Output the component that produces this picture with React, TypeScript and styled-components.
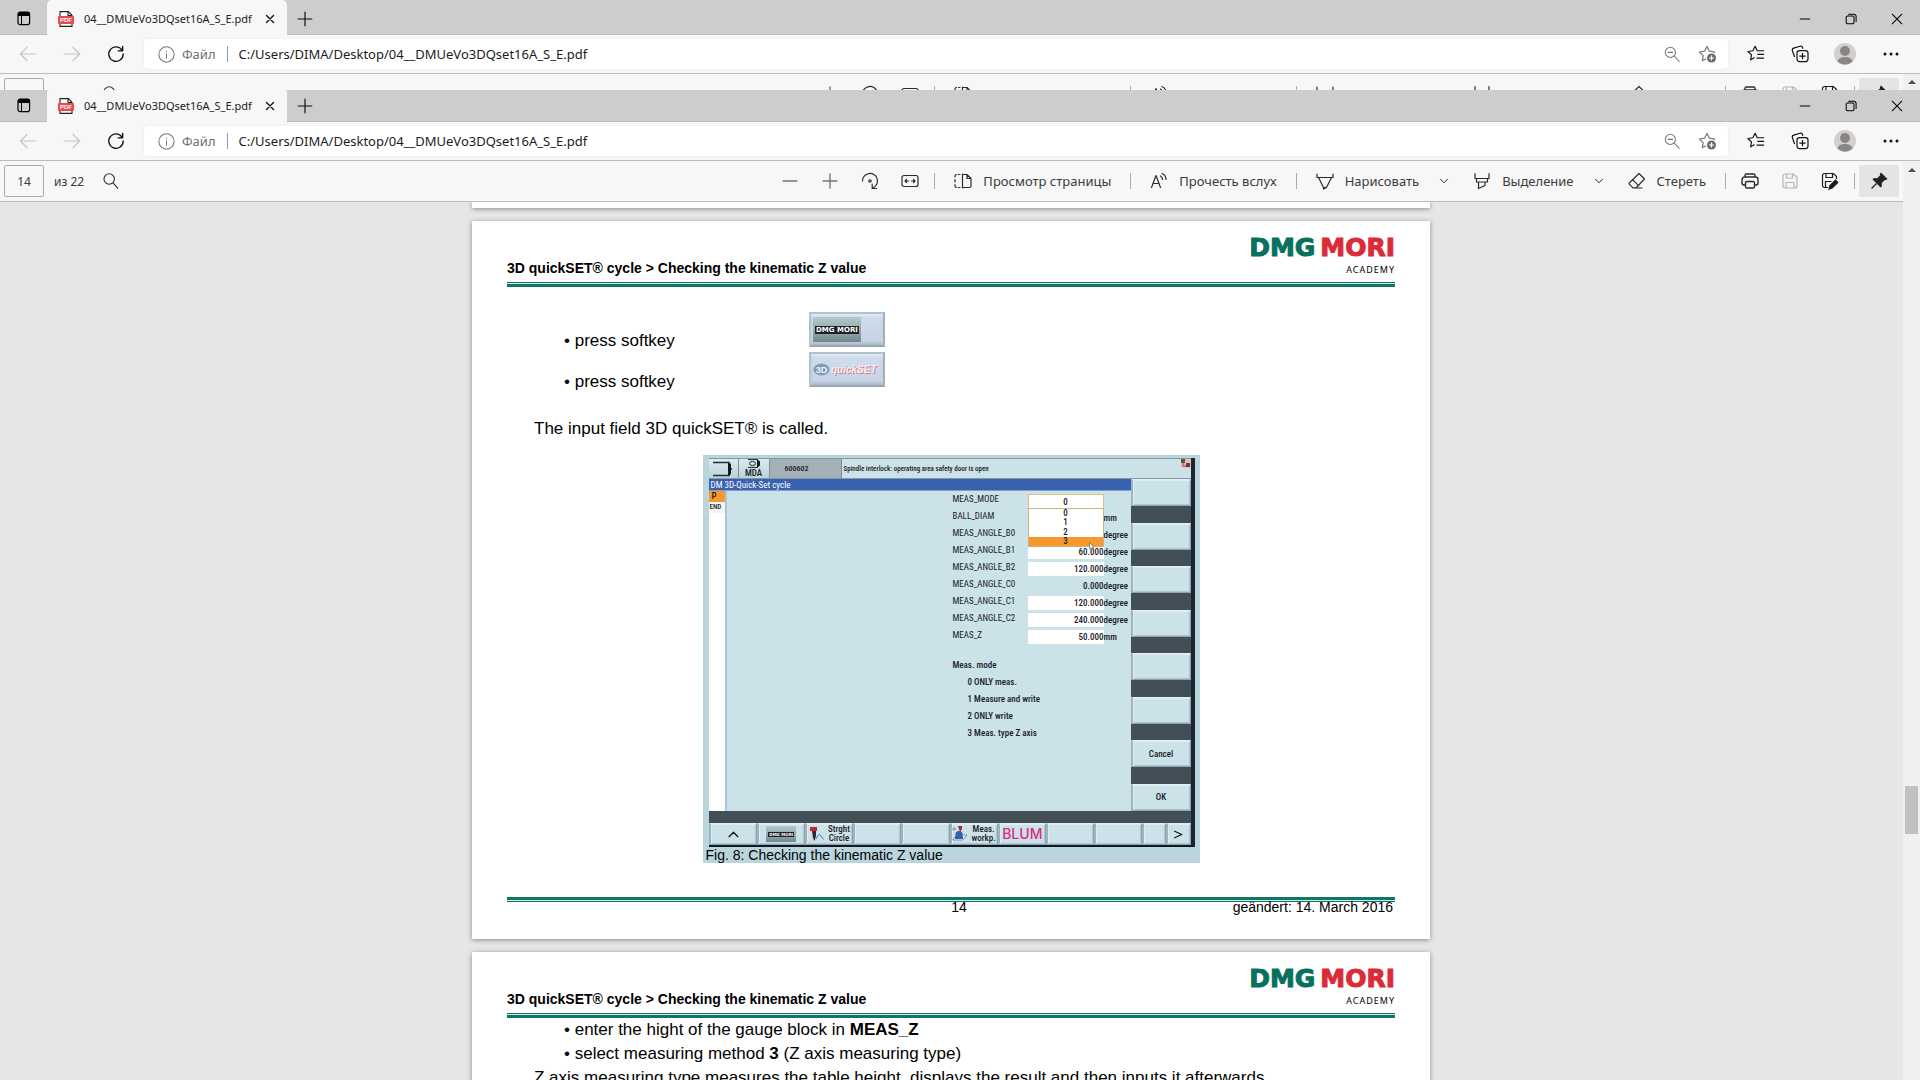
import React from "react";
import styled, { createGlobalStyle } from "styled-components";

const uiFont = `"Noto Sans", "Open Sans", sans-serif`;
const docFont = `"Liberation Sans", Arial, sans-serif`;
const cncFont = `"Roboto Condensed", Roboto, "Liberation Sans", sans-serif`;
const teal = "#12756a";

const GlobalStyle = createGlobalStyle`
  * { box-sizing: border-box; }
  body { margin: 0; overflow: hidden; font-family: ${uiFont}; color: #1b1b1b; }
  button, input, select { font: inherit; color: inherit; margin: 0; padding: 0; border: 0; background: none; border-radius: 0; }
  svg { display: block; flex: none; }
  p, h2, ul, figure { margin: 0; padding: 0; }
`;

/* ---------- browser chrome ---------- */

const Screen = styled.div`
  display: flex;
  flex-direction: column;
  height: 100vh;
`;

const WindowFrame = styled.section<{ $peek?: boolean }>`
  display: flex;
  flex-direction: column;
  overflow: hidden;
  min-height: 0;
  flex: ${(p) => (p.$peek ? "none" : "1")};
  height: ${(p) => (p.$peek ? "90px" : "auto")};
`;

const TabStrip = styled.div<{ $peek?: boolean }>`
  display: flex;
  flex: none;
  height: ${(p) => (p.$peek ? "35px" : "32px")};
  background: #cdcdcd;
`;

const StripButton = styled.button<{ $w: number; $peek?: boolean }>`
  display: flex;
  align-items: center;
  justify-content: center;
  width: ${(p) => p.$w}px;
  padding-top: ${(p) => (p.$peek ? "3px" : "0")};
  border-bottom: 1px solid #bcbcbc;
`;

const StripFill = styled.div`
  flex: 1;
  border-bottom: 1px solid #bcbcbc;
`;

const Tab = styled.div<{ $peek?: boolean }>`
  display: flex;
  align-items: center;
  width: 240px;
  padding: ${(p) => (p.$peek ? "3px" : "0")} 9px 0 11px;
  background: #f7f7f7;
  border-radius: ${(p) => (p.$peek ? "5px 5px 0 0" : "2px 2px 0 0")};
`;

const TabTitle = styled.span`
  flex: 1;
  margin-left: 10px;
  font-size: 11px;
  line-height: 16px;
  white-space: nowrap;
`;

const TabClose = styled.button`
  display: flex;
  align-items: center;
  justify-content: center;
  width: 16px;
  height: 16px;
`;

const AddressRow = styled.div`
  display: flex;
  align-items: center;
  flex: none;
  height: 39px;
  padding: 0 6px;
  background: #f7f7f7;
  border-bottom: 1px solid #bcbcbc;
`;

const NavButton = styled.button<{ $w: number }>`
  display: flex;
  align-items: center;
  justify-content: center;
  width: ${(p) => p.$w}px;
  height: 30px;
`;

const AddressBox = styled.div`
  display: flex;
  align-items: center;
  flex: 1;
  height: 30px;
  margin: 0 6px;
  padding: 0 2px 0 14px;
  background: #fff;
  border-radius: 4px;
  box-shadow: 0 0 2px #e2e2e2;
`;

const Scheme = styled.label`
  margin-left: 7px;
  padding-right: 11px;
  font-size: 13px;
  line-height: 16px;
  color: #6f6f6f;
  border-right: 1px solid #9a9a9a;
`;

const UrlInput = styled.input`
  flex: 1;
  margin-left: 11px;
  font-size: 13px;
  line-height: 16px;
  outline: none;
`;

/* ---------- pdf viewer chrome ---------- */

const Viewer = styled.div`
  display: flex;
  flex: 1;
  min-height: 0;
`;

const ViewerMain = styled.div`
  display: flex;
  flex-direction: column;
  flex: 1;
  min-width: 0;
`;

const PdfBar = styled.div`
  display: flex;
  align-items: center;
  flex: none;
  height: 41px;
  padding-left: 4px;
  background: #f7f7f7;
  border-bottom: 1px solid #bcbcbc;
  font-size: 13px;
  color: #3b3b3b;
`;

const PageInput = styled.input`
  width: 40px;
  height: 32px;
  border: 1px solid #a9a9a9;
  border-radius: 2px;
  font-size: 12px;
  text-align: center;
`;

const PageCount = styled.label`
  margin: 0 3px 0 10px;
  font-size: 12px;
`;

const BarGroup = styled.div<{ $push?: boolean }>`
  display: flex;
  padding: 0 4px;
  margin-left: ${(p) => (p.$push ? "auto" : "0")};
`;

const BarIcon = styled.button<{ $active?: boolean }>`
  display: flex;
  align-items: center;
  justify-content: center;
  width: 40px;
  height: 32px;
  border-radius: 2px;
  background: ${(p) => (p.$active ? "#e4e4e4" : "transparent")};
`;

const BarLabel = styled.button<{ $tight?: boolean }>`
  display: flex;
  align-items: center;
  gap: 10px;
  height: 32px;
  padding: 0 ${(p) => (p.$tight ? "15px" : "19px")} 0 18px;
  white-space: nowrap;
`;

const BarChevron = styled.button`
  display: flex;
  align-items: center;
  justify-content: center;
  width: 20px;
  height: 32px;
`;

const BarRule = styled.span`
  width: 1px;
  height: 16px;
  background: #ababab;
`;

const ScrollTrack = styled.div`
  display: flex;
  flex-direction: column;
  width: 17px;
  background: #f0f0f0;
`;

const ScrollArrow = styled.button`
  display: flex;
  align-items: center;
  justify-content: center;
  height: 17px;
`;

const ScrollGap = styled.div<{ $grow: number }>`
  flex: ${(p) => p.$grow};
`;

const ScrollThumb = styled.div`
  height: 48px;
  margin: 0 2px;
  background: #c1c1c1;
`;

/* ---------- document ---------- */

const Canvas = styled.main`
  display: flex;
  flex-direction: column;
  align-items: center;
  gap: 13px;
  flex: 1;
  min-height: 0;
  padding-right: 1px;
  overflow: hidden;
  background: #e6e6e6;
  font-family: ${docFont};
  color: #000;
`;

const Sheet = styled.article`
  flex: none;
  width: 100%;
  max-width: 958px;
  padding: 0 35px 27px;
  background: #fff;
  box-shadow: 0 1px 5px rgba(0, 0, 0, 0.4);
`;

const SheetTail = styled.div`
  flex: none;
  width: 100%;
  max-width: 958px;
  height: 6px;
  background: #fff;
  box-shadow: 0 1px 5px rgba(0, 0, 0, 0.4);
`;

const SheetHeader = styled.header`
  display: flex;
  align-items: flex-end;
  justify-content: space-between;
  padding: 18px 0 4px;
`;

const SheetTitle = styled.h2`
  font-size: 14px;
  font-weight: 700;
  line-height: 20px;
`;

const Brand = styled.div`
  display: flex;
  flex-direction: column;
  align-items: flex-end;
  gap: 8px;
  padding-bottom: 2px;
`;

const BrandName = styled.span`
  display: flex;
  gap: 5px;
  font: 700 25px/17px "DejaVu Sans", Verdana, sans-serif;
  color: #07705f;
  -webkit-text-stroke: 1px currentColor;
`;

const BrandRed = styled.span`
  color: #dc2b38;
`;

const BrandSub = styled.span`
  font: 400 9px/12px ${uiFont};
  letter-spacing: 1px;
`;

const DoubleRule = styled.div<{ $flip?: boolean }>`
  height: 5px;
  background: linear-gradient(
    ${(p) => (p.$flip ? "to top" : "to bottom")},
    ${teal} 1px, #cfe9e4 1px, #cfe9e4 2px, ${teal} 2px, ${teal} 5px
  );
`;

const SoftkeyRow = styled.div`
  display: grid;
  grid-template-columns: 302px auto;
  align-items: start;
  justify-content: start;
  padding-top: 25px;
`;

const BulletList = styled.ul<{ $spaced?: boolean }>`
  display: flex;
  flex-direction: column;
  gap: ${(p) => (p.$spaced ? "17px" : "0")};
  padding: ${(p) => (p.$spaced ? "17px" : "0")} 0 0 57px;
  list-style: none;
  font-size: 17px;
  line-height: 24px;
`;

const SoftkeyStack = styled.div`
  display: flex;
  flex-direction: column;
  gap: 5px;
`;

const Softkey = styled.button`
  display: flex;
  align-items: center;
  width: 76px;
  height: 35px;
  padding: 0 2px;
  background: linear-gradient(#d3dfee, #c4d1e4);
  border: 2px solid;
  border-color: #b4c0ca #a3afb9 #9aa7b1 #b4c0ca;
  box-shadow: inset 0 2px 2px #dcebf5, inset 0 -2px 3px #a9b7c4;
`;

const SoftkeyPlate = styled.span<{ $small?: boolean }>`
  display: flex;
  align-items: center;
  justify-content: center;
  width: ${(p) => (p.$small ? "30px" : "48px")};
  height: ${(p) => (p.$small ? "16px" : "25px")};
  background: linear-gradient(#b4c9ca, #8fa5a8 60%, #6f898f);
`;

const PlateText = styled.span<{ $small?: boolean }>`
  padding: 0 1px;
  background: #1c2225;
  color: #fff;
  font: 700 ${(p) => (p.$small ? "4px/5px" : "7px/8px")} "DejaVu Sans", sans-serif;
  white-space: nowrap;
`;

const QuickSet = styled.span`
  margin-left: 1px;
  font-size: 10px;
  font-style: italic;
  font-weight: 700;
  color: #f4eef4;
  text-shadow: 1px 1px 0 #d67f88;
`;

const Paragraph = styled.p<{ $first?: boolean }>`
  margin-top: ${(p) => (p.$first ? "23px" : "0")};
  padding-left: 27px;
  font-size: 17px;
  line-height: 24px;
`;

const Figure = styled.figure`
  width: 497px;
  margin: 14px auto 34px;
  padding: 3px 5px 0 6px;
  background: #bad5dd;
`;

const Caption = styled.figcaption`
  margin-left: -3px;
  font-size: 14px;
  line-height: 16px;
  white-space: nowrap;
`;

const SheetFooter = styled.footer`
  display: grid;
  grid-template-columns: 1fr auto 1fr;
  padding: 0 2px 0 18px;
  font-size: 14px;
  line-height: 10px;
`;

const FooterDate = styled.span`
  text-align: right;
`;

/* ---------- machine control panel ---------- */

const Panel = styled.div`
  border-right: 4px solid #1a2530;
  border-bottom: 2px solid #0f1a26;
  background: #424f57;
  font: 500 9px/10px ${cncFont};
  color: #1a2126;
`;

const StatusRow = styled.div`
  display: flex;
  height: 21px;
  border-top: 1px solid #87989f;
  border-bottom: 1px solid #87989f;
  background: #cbe2e9;
`;

const StatusCell = styled.div<{ $w: number; $dark?: boolean }>`
  display: flex;
  flex-direction: column;
  align-items: ${(p) => (p.$dark ? "flex-start" : "center")};
  justify-content: center;
  width: ${(p) => p.$w}px;
  padding-left: ${(p) => (p.$dark ? "15px" : "0")};
  border-right: 1px solid #7f929b;
  font-size: ${(p) => (p.$dark ? "8px" : "9px")};
  background: ${(p) => (p.$dark ? "#a3b0b7" : "linear-gradient(#dcebf1, #bcd2db)")};
`;

const StatusMessage = styled.div`
  flex: 1;
  padding-left: 2px;
  font-size: 7px;
  line-height: 21px;
`;

const PanelBody = styled.div`
  display: flex;
  height: 332px;
`;

const WorkArea = styled.div`
  display: flex;
  flex-direction: column;
  flex: 1;
  background: #cbe2e9;
`;

const CycleTitle = styled.div`
  height: 12px;
  padding-left: 2px;
  line-height: 12px;
  font-weight: 400;
  background: #3862af;
  border-bottom: 1px solid #7ba0d0;
  color: #fff;
`;

const WorkColumns = styled.div`
  display: flex;
  flex: 1;
`;

const ProgramList = styled.div`
  width: 18px;
  background: #fff;
  border-right: 2px solid #a9c5d8;
`;

const ProgramLine = styled.div<{ $current?: boolean }>`
  height: 11px;
  padding-left: ${(p) => (p.$current ? "3px" : "1px")};
  font-size: ${(p) => (p.$current ? "9px" : "7px")};
  line-height: 11px;
  background: ${(p) => (p.$current ? "#f7982d" : "#f2f5f3")};
`;

const CycleForm = styled.form`
  width: 178px;
  margin-left: auto;
  padding-top: 3px;
`;

const FieldGrid = styled.div`
  display: grid;
  grid-template-columns: 75px 76px auto;
  grid-auto-rows: 14px;
  row-gap: 3px;
`;

const FieldName = styled.label`
  font-weight: 400;
  line-height: 10px;
`;

const FieldValue = styled.input<{ $plain?: boolean }>`
  width: 76px;
  height: 14px;
  text-align: right;
  background: ${(p) => (p.$plain ? "transparent" : "#fff")};
`;

const FieldUnit = styled.span`
  line-height: 15px;
`;

const ModeCell = styled.div`
  position: relative;
`;

const ModeSelect = styled.select`
  appearance: none;
  display: block;
  width: 76px;
  height: 15px;
  border: 1px solid #e3bd83;
  background: #fff;
  text-align: center;
  text-align-last: center;
`;

const ModeOptions = styled.ul`
  position: absolute;
  z-index: 1;
  top: 14px;
  left: 0;
  display: flex;
  flex-direction: column;
  width: 76px;
  height: 39px;
  border: 1px solid #c9b18c;
  background: #fff;
  list-style: none;
`;

const ModeOption = styled.li<{ $hot?: boolean }>`
  flex: 1;
  text-align: center;
  line-height: 9px;
  background: ${(p) => (p.$hot ? "#f7982d" : "transparent")};
`;

const Pointer = styled.svg`
  position: absolute;
  z-index: 2;
  top: 48px;
  left: 61px;
`;

const ModeLegend = styled.div`
  margin-top: 13px;
  line-height: 17px;
`;

const LegendLine = styled.div`
  padding-left: 15px;
`;

const KeyColumn = styled.div`
  display: flex;
  flex-direction: column;
  justify-content: space-between;
  width: 60px;
`;

const PanelKey = styled.button`
  display: flex;
  align-items: center;
  justify-content: center;
  gap: 3px;
  height: 27px;
  min-width: 0;
  background: #cbe2e9;
  border: 1px solid;
  border-width: 1px 1px 1px 2px;
  border-color: #e0eef3 #8fa4ae #8fa4ae #9fb3bc;
  box-shadow: inset 1px 1px 1px #e0eef3, inset -1px -1px 1px #b0c6cf;
  text-align: center;
`;

const KeyRow = styled.div`
  display: grid;
  grid-template-columns: repeat(9, 2fr) 1fr 1fr;
  padding-top: 12px;
`;

const RowKey = styled(PanelKey)`
  height: 22px;
  line-height: 9px;
`;

const Blum = styled.span`
  font: 500 14px/14px Inter, sans-serif;
  color: #dc2a8c;
`;

/* ---------- icons ---------- */

type IconProps = { d: string; size?: number; c?: string; w?: number };
const Icon = ({ d, size = 20, c = "#2b2b2b", w = 1.2 }: IconProps) => (
  <svg width={size} height={size} viewBox="0 0 20 20" fill="none" stroke={c} strokeWidth={w} strokeLinejoin="round" strokeLinecap="round" aria-hidden="true">
    <path d={d} />
  </svg>
);

const TabActions = () => (
  <svg width="14" height="15" viewBox="0 0 14 15" aria-hidden="true">
    <rect x="1" y="1" width="11.6" height="12.6" rx="2.2" fill="none" stroke="#000" strokeWidth="1.2" />
    <path d="M1 5V3a2 2 0 0 1 2-2h7.600a2 2 0 0 1 2 2v2z" />
    <path d="M4.500 5v8.500" stroke="#000" />
  </svg>
);

const PdfFile = () => (
  <svg width="16" height="16" viewBox="0 0 16 16" aria-hidden="true">
    <path d="M2 .6h8.300L14 4.300v11.100H2z" fill="#fff" stroke="#222" strokeWidth="1.100" />
    <path d="M10 .6v4h4" fill="none" stroke="#222" strokeWidth="1.100" />
    <rect x="0" y="5" width="16" height="8" rx="1" fill="#e8494c" />
    <text x="8" y="11.400" textAnchor="middle" fontFamily="Liberation Sans" fontWeight="700" fontSize="6" fill="#fff">PDF</text>
  </svg>
);

const StarPlus = () => (
  <svg width="20" height="18" viewBox="0 0 20 18" aria-hidden="true">
    <path d="M8 13.800 4.300 15.700 5.200 10.600 1.400 7l5.200-.8L9 1.400l2.400 4.800 5.200.8-1 1" fill="none" stroke="#767676" strokeWidth="1.200" strokeLinejoin="round" />
    <circle cx="13.500" cy="13" r="4.500" fill="#6b6b6b" />
    <path d="M13.500 10.500v5M11 13h5" stroke="#fff" strokeWidth="1.200" />
  </svg>
);

const Collections = () => (
  <svg width="18" height="18" viewBox="0 0 18 18" fill="none" stroke="#111" strokeWidth="1.200" aria-hidden="true">
    <path d="M3.600 12 1.400 5.600a2 2 0 0 1 1.300-2.500L9 1.200a2 2 0 0 1 2.500 1.300l.4 1.300" />
    <rect x="6" y="5.600" width="11" height="11" rx="2.500" />
    <path d="M11.500 8v6.200M8.400 11.100h6.200" />
  </svg>
);

const Avatar = () => (
  <svg width="22" height="22" viewBox="0 0 22 22" aria-hidden="true">
    <circle cx="11" cy="11" r="11" fill="#d2d0ce" />
    <circle cx="11" cy="8" r="5" fill="#8a8683" />
    <path d="M3.500 18.500c1-3.400 4-4.500 7.500-4.500s6.500 1.100 7.500 4.500a11 11 0 0 1-15 0z" fill="#8a8683" />
  </svg>
);

const Pin = () => (
  <svg width="20" height="20" viewBox="0 0 20 20" aria-hidden="true">
    <path d="M12 1.500 18.500 8l-1.300 1-1.400-.1-3 3 .1 3.300-1.300 1.300L3.500 8.400l1.300-1.300 3.300.1 3-3-.1-1.400z" fill="#222" />
    <path d="M7.500 12.500 2.500 17.500" stroke="#222" strokeWidth="1.200" />
  </svg>
);

const SaveAs = () => (
  <svg width="20" height="20" viewBox="0 0 20 20" fill="none" stroke="#1b1b1b" strokeWidth="1.200" aria-hidden="true">
    <path d="M8 16.500H4.500a2 2 0 0 1-2-2v-10a2 2 0 0 1 2-2h9l3 3V8M6 2.500v4h6.500v-4M5.500 16.500v-6h6" />
    <path d="M9 18l1-3.500 5.500-5.300 2.200 2.200L12.200 17z" fill="#1b1b1b" />
  </svg>
);

/* ---------- composition ---------- */

const FILE = "04__DMUeVo3DQset16A_S_E.pdf";

function BrowserChrome({ id, peek }: { id: string; peek?: boolean }) {
  return (
    <>
      <TabStrip $peek={peek}>
        <StripButton $w={47} $peek={peek} aria-label="Tab actions"><TabActions /></StripButton>
        <Tab $peek={peek}>
          <PdfFile />
          <TabTitle>{FILE}</TabTitle>
          <TabClose aria-label="Close tab"><Icon size={14} c="#111" w={2} d="M5 5l10 10M15 5L5 15" /></TabClose>
        </Tab>
        <StripButton $w={35} $peek={peek} aria-label="New tab"><Icon size={16} c="#111" w={1.5} d="M10 1.500v17M1.500 10h17" /></StripButton>
        <StripFill />
        <StripButton $w={46} $peek={peek} aria-label="Minimize"><Icon size={12} c="#000" w={1.7} d="M2 10h16" /></StripButton>
        <StripButton $w={46} $peek={peek} aria-label="Restore"><Icon size={12} c="#000" w={1.7} d="M4 5h9a2 2 0 0 1 2 2v9a2 2 0 0 1-2 2H4a2 2 0 0 1-2-2V7a2 2 0 0 1 2-2zM6 2h8.500a4 4 0 0 1 4 4v8" /></StripButton>
        <StripButton $w={46} $peek={peek} aria-label="Close"><Icon size={12} c="#000" w={1.7} d="M2 2l16 16M18 2L2 18" /></StripButton>
      </TabStrip>
      <AddressRow>
        <NavButton $w={44} aria-label="Back"><Icon size={18} c="#c4c4c4" d="M18.500 10H1.500M9 2.500 1.500 10 9 17.500" /></NavButton>
        <NavButton $w={44} aria-label="Forward"><Icon size={18} c="#c4c4c4" d="M1.500 10h17M11 2.500l7.500 7.500-7.500 7.500" /></NavButton>
        <NavButton $w={44} aria-label="Refresh"><Icon size={18} c="#111" w={1.5} d="M17 6.200A8 8 0 1 0 18 10M17.400 1.500v5h-5" /></NavButton>
        <AddressBox>
          <Icon size={17} c="#767676" d="M10 1a9 9 0 1 0 0 18a9 9 0 1 0 0-18M10 9v5.500M10 5.800v.6" />
          <Scheme htmlFor={id}>Файл</Scheme>
          <UrlInput id={id} readOnly value={`C:/Users/DIMA/Desktop/${FILE}`} />
          <NavButton $w={36} aria-label="Zoom"><Icon size={17} c="#767676" d="M7.500 1.500a6 6 0 1 0 0 12a6 6 0 1 0 0-12M12 12l6 6M4.800 7.500h5.400" /></NavButton>
          <NavButton $w={36} aria-label="Add to favourites"><StarPlus /></NavButton>
        </AddressBox>
        <NavButton $w={44} aria-label="Favourites"><Icon size={18} c="#111" w={1.3} d="M8 14.200 4 16.500 5 11 1 7.200 6.500 6.400 9 1.500l2.400 4.900h7.100M12 10.500h6.500M11 14.500h7.500" /></NavButton>
        <NavButton $w={44} aria-label="Collections"><Collections /></NavButton>
        <NavButton $w={46} aria-label="Profile"><Avatar /></NavButton>
        <NavButton $w={46} aria-label="Menu"><Icon size={20} c="#111" w={3} d="M4 10h.01M10 10h.01M16 10h.01" /></NavButton>
      </AddressRow>
    </>
  );
}

function PdfToolbar({ id }: { id: string }) {
  return (
    <PdfBar>
      <PageInput id={id} defaultValue="14" />
      <PageCount htmlFor={id}>из 22</PageCount>
      <BarGroup>
        <BarIcon aria-label="Find"><Icon size={18} d="M8 2a5.800 5.800 0 1 0 0 11.600A5.800 5.800 0 1 0 8 2M12.200 12.200l5.300 5.800" /></BarIcon>
      </BarGroup>
      <BarGroup $push>
        <BarIcon aria-label="Zoom out"><Icon c="#777" w={1.4} d="M3 10h14" /></BarIcon>
        <BarIcon aria-label="Zoom in"><Icon c="#777" w={1.4} d="M3 10h14M10 3v14" /></BarIcon>
        <BarIcon aria-label="Rotate"><Icon d="M2.500 10a7.500 7.500 0 1 1 11 6.600M12.200 13.200v4.300h4.300M10 8.800a1.200 1.200 0 1 0 0 2.400a1.200 1.200 0 1 0 0-2.400" /></BarIcon>
        <BarIcon aria-label="Fit to width"><Icon d="M4 4.500h12a2 2 0 0 1 2 2v7a2 2 0 0 1-2 2H4a2 2 0 0 1-2-2v-7a2 2 0 0 1 2-2M5 10h3.500M15 10h-3.500M6.500 8.500 5 10l1.500 1.500M13.500 8.500 15 10l-1.500 1.500" /></BarIcon>
      </BarGroup>
      <BarRule />
      <BarLabel><Icon d="M9.500 3v14M9.500 3.500h4.500l4 4v7.500a1.500 1.500 0 0 1-1.500 1.500h-7M14 3.500v4h4M7 3.500H5.500M3.500 3.500a1.500 1.500 0 0 0-1.500 1.500v1M2 8.500v2.500M2 13.500v1.500a1.500 1.500 0 0 0 1.500 1.500M5.500 16.500H7" />Просмотр страницы</BarLabel>
      <BarRule />
      <BarLabel><Icon d="M2.500 16.500 7 4.500l4.500 12M4 12.500h6M11.500 5a4 4 0 0 1 2 3.500M13 2.500a6.500 6.500 0 0 1 4 6" />Прочесть вслух</BarLabel>
      <BarRule />
      <BarLabel $tight><Icon d="M2 3v3.500h16V3M3.500 6.500l5 10h3l5-10M8.500 16.500v1.500l3-1.500" />Нарисовать</BarLabel>
      <BarChevron aria-label="Draw options"><Icon size={10} w={2} d="M3 6.500l7 7 7-7" /></BarChevron>
      <BarLabel $tight><Icon d="M3 2.500v5h14v-5M4.500 7.500v3.500h11V7.500M6.500 11v6.500l6.500-3V11" />Выделение</BarLabel>
      <BarChevron aria-label="Highlight options"><Icon size={10} w={2} d="M3 6.500l7 7 7-7" /></BarChevron>
      <BarLabel><Icon d="M12 2.500 17.500 8 9 16.800H6L2.500 13.300a1 1 0 0 1 0-1.600zM5.800 8.800l6 6M6 17h9" />Стереть</BarLabel>
      <BarRule />
      <BarGroup>
        <BarIcon aria-label="Print"><Icon w={1.4} d="M5.500 14H4a2 2 0 0 1-2-2V8.500a2.500 2.500 0 0 1 2.500-2.500h11A2.500 2.500 0 0 1 18 8.500V12a2 2 0 0 1-2 2h-1.500M5 6V4.500a1.500 1.500 0 0 1 1.500-1.500h7A1.500 1.500 0 0 1 15 4.500V6M7 10.500h6a1.500 1.500 0 0 1 1.500 1.500v3.500A1.500 1.500 0 0 1 13 17H7a1.500 1.500 0 0 1-1.500-1.500V12A1.500 1.500 0 0 1 7 10.500z" /></BarIcon>
        <BarIcon aria-label="Save"><Icon c="#b5b5b5" d="M5 3h8.500L17 6.500V15a2 2 0 0 1-2 2H5a2 2 0 0 1-2-2V5a2 2 0 0 1 2-2M6.500 3v4h6V3M6 17v-5.500h8V17" /></BarIcon>
        <BarIcon aria-label="Save as"><SaveAs /></BarIcon>
      </BarGroup>
      <BarRule />
      <BarGroup>
        <BarIcon $active aria-label="Pin toolbar"><Pin /></BarIcon>
      </BarGroup>
    </PdfBar>
  );
}

const ArrowUp = () => (
  <svg width="8" height="4" viewBox="0 0 8 4" aria-hidden="true"><path d="M0 4l4-4 4 4z" fill="#505050" /></svg>
);

function SheetTop() {
  return (
    <>
      <SheetHeader>
        <SheetTitle>3D quickSET® cycle &gt; Checking the kinematic Z value</SheetTitle>
        <Brand>
          <BrandName><span>DMG</span><BrandRed>MORI</BrandRed></BrandName>
          <BrandSub>ACADEMY</BrandSub>
        </Brand>
      </SheetHeader>
      <DoubleRule />
    </>
  );
}

const fields = [
  { name: "BALL_DIAM", value: "", unit: "mm" },
  { name: "MEAS_ANGLE_B0", value: "", unit: "degree" },
  { name: "MEAS_ANGLE_B1", value: "60.000", unit: "degree" },
  { name: "MEAS_ANGLE_B2", value: "120.000", unit: "degree" },
  { name: "MEAS_ANGLE_C0", value: "0.000", unit: "degree", plain: true },
  { name: "MEAS_ANGLE_C1", value: "120.000", unit: "degree" },
  { name: "MEAS_ANGLE_C2", value: "240.000", unit: "degree" },
  { name: "MEAS_Z", value: "50.000", unit: "mm" },
];

function ControlPanel() {
  return (
    <Panel>
      <StatusRow>
        <StatusCell $w={30}>
          <svg width="22" height="16" viewBox="0 0 22 16" aria-hidden="true">
            <path d="M1 1.500h16v13H1" fill="none" stroke="#222c30" strokeWidth="1.400" /><path d="M16 1l3 2v4l1.500 1L19 9v4l-3 2z" fill="#111a1d" />
          </svg>
        </StatusCell>
        <StatusCell $w={31}>
          <svg width="14" height="9" viewBox="0 0 14 9" aria-hidden="true">
            <path d="M1 .6h9.500v7.800H1" fill="none" stroke="#1c2427" /><path d="M10 0l3 2.500v4L10 9z" fill="#111a1d" /><ellipse cx="5.500" cy="4.500" rx="3" ry="2" fill="none" stroke="#1c2427" />
          </svg>
          MDA
        </StatusCell>
        <StatusCell $w={72} $dark>600602</StatusCell>
        <StatusMessage>Spindle interlock: operating area safety door is open</StatusMessage>
        <svg width="10" height="9" viewBox="0 0 10 9" aria-hidden="true">
          <rect width="10" height="9" fill="#eeb9bd" /><rect width="4" height="4" fill="#4a5a3c" /><rect x="5" y="4" width="4" height="4" fill="#6d3640" /><path d="M2 4v3h3" fill="none" stroke="#b33" />
        </svg>
      </StatusRow>
      <PanelBody>
        <WorkArea>
          <CycleTitle>DM 3D-Quick-Set cycle</CycleTitle>
          <WorkColumns>
            <ProgramList>
              <ProgramLine $current>P</ProgramLine>
              <ProgramLine>END</ProgramLine>
            </ProgramList>
            <CycleForm>
              <FieldGrid>
                <FieldName htmlFor="meas-mode">MEAS_MODE</FieldName>
                <ModeCell>
                  <ModeSelect id="meas-mode" defaultValue="0">
                    <option>0</option><option>1</option><option>2</option><option>3</option>
                  </ModeSelect>
                  <ModeOptions>
                    <ModeOption>0</ModeOption>
                    <ModeOption>1</ModeOption>
                    <ModeOption>2</ModeOption>
                    <ModeOption $hot>3</ModeOption>
                  </ModeOptions>
                  <Pointer width="6" height="9" viewBox="0 0 6 9" aria-hidden="true">
                    <path d="M.5.500v6.500l1.500-1.300 1 2.500 1-.4-1-2.400h2z" fill="#fff" stroke="#555" strokeWidth=".6" />
                  </Pointer>
                </ModeCell>
                <FieldUnit />
                {fields.map((f) => (
                  <React.Fragment key={f.name}>
                    <FieldName htmlFor={f.name}>{f.name}</FieldName>
                    <FieldValue id={f.name} defaultValue={f.value} $plain={f.plain} />
                    <FieldUnit>{f.unit}</FieldUnit>
                  </React.Fragment>
                ))}
              </FieldGrid>
              <ModeLegend>
                Meas. mode
                <LegendLine>0 ONLY meas.</LegendLine>
                <LegendLine>1 Measure and write</LegendLine>
                <LegendLine>2 ONLY write</LegendLine>
                <LegendLine>3 Meas. type Z axis</LegendLine>
              </ModeLegend>
            </CycleForm>
          </WorkColumns>
        </WorkArea>
        <KeyColumn>
          {["", "", "", "", "", "", "Cancel", "OK"].map((k, i) => (
            <PanelKey key={i} aria-label={k || `Softkey ${i + 1}`}>{k}</PanelKey>
          ))}
        </KeyColumn>
      </PanelBody>
      <KeyRow>
        <RowKey aria-label="Up"><Icon size={11} c="#111" w={2.2} d="M2 14l8-8 8 8" /></RowKey>
        <RowKey><SoftkeyPlate $small><PlateText $small>DMG MORI</PlateText></SoftkeyPlate></RowKey>
        <RowKey>
          <svg width="16" height="16" viewBox="0 0 16 16" aria-hidden="true">
            <path d="M1 1h7v4H1z" fill="#c4252c" /><path d="M3 5h4v5l-1.500 5L4 12z" fill="#32262b" /><path d="M7 13c2-5 4-5 5-3s2 3 3 3" fill="none" stroke="#3a75c0" />
          </svg>
          <span>Strght<br />Circle</span>
        </RowKey>
        <RowKey aria-label="Empty 4" />
        <RowKey aria-label="Empty 5" />
        <RowKey>
          <svg width="16" height="17" viewBox="0 0 16 17" aria-hidden="true">
            <path d="M1 13l4-4h10l-4 5H1z" fill="#f4f7f9" stroke="#5d6d78" strokeWidth=".7" /><circle cx="7" cy="8.500" r="3.600" fill="#2f62b5" /><path d="M3 10h8v3H3z" fill="#2f62b5" /><path d="M6 0h4v3L8 6z" fill="#a02835" /><circle cx="2" cy="3" r="1.200" fill="none" stroke="#667" strokeWidth=".7" />
          </svg>
          <span>Meas.<br />workp.</span>
        </RowKey>
        <RowKey><Blum>BLUM</Blum></RowKey>
        <RowKey aria-label="Empty 8" />
        <RowKey aria-label="Empty 9" />
        <RowKey aria-label="Empty 10" />
        <RowKey aria-label="Next"><Icon size={11} c="#111" w={2.2} d="M3 4l13 6-13 6" /></RowKey>
      </KeyRow>
    </Panel>
  );
}

export default function App() {
  return (
    <Screen>
      <GlobalStyle />
      <WindowFrame $peek>
        <BrowserChrome id="url-back" peek />
        <Viewer>
          <ViewerMain><PdfToolbar id="page-back" /></ViewerMain>
          <ScrollTrack><ScrollArrow aria-label="Scroll up"><ArrowUp /></ScrollArrow></ScrollTrack>
        </Viewer>
      </WindowFrame>
      <WindowFrame>
        <BrowserChrome id="url-front" />
        <Viewer>
          <ViewerMain>
            <PdfToolbar id="page-front" />
            <Canvas>
              <SheetTail />
              <Sheet>
                <SheetTop />
                <SoftkeyRow>
                  <BulletList $spaced>
                    <li>• press softkey</li>
                    <li>• press softkey</li>
                  </BulletList>
                  <SoftkeyStack>
                    <Softkey>
                      <SoftkeyPlate><PlateText>DMG MORI</PlateText></SoftkeyPlate>
                    </Softkey>
                    <Softkey>
                      <svg width="17" height="13" viewBox="0 0 17 13" aria-hidden="true">
                        <ellipse cx="8.500" cy="6.500" rx="8" ry="6" fill="#7f9cba" />
                        <text x="8.500" y="10" textAnchor="middle" fontFamily="Liberation Sans" fontWeight="700" fontSize="9" fill="#eef4fa">3D</text>
                      </svg>
                      <QuickSet>quickSET</QuickSet>
                    </Softkey>
                  </SoftkeyStack>
                </SoftkeyRow>
                <Paragraph $first>The input field 3D quickSET® is called.</Paragraph>
                <Figure>
                  <ControlPanel />
                  <Caption>Fig. 8: Checking the kinematic Z value</Caption>
                </Figure>
                <DoubleRule $flip />
                <SheetFooter>
                  <span />
                  <span>14</span>
                  <FooterDate>geändert: 14. March 2016</FooterDate>
                </SheetFooter>
              </Sheet>
              <Sheet>
                <SheetTop />
                <BulletList>
                  <li>• enter the hight of the gauge block in <b>MEAS_Z</b></li>
                  <li>• select measuring method <b>3</b> (Z axis measuring type)</li>
                </BulletList>
                <Paragraph>Z axis measuring type measures the table height, displays the result and then inputs it afterwards</Paragraph>
              </Sheet>
            </Canvas>
          </ViewerMain>
          <ScrollTrack>
            <ScrollArrow aria-label="Scroll up"><ArrowUp /></ScrollArrow>
            <ScrollGap $grow={608} />
            <ScrollThumb />
            <ScrollGap $grow={229} />
            <ScrollArrow aria-label="Scroll down" />
          </ScrollTrack>
        </Viewer>
      </WindowFrame>
    </Screen>
  );
}
